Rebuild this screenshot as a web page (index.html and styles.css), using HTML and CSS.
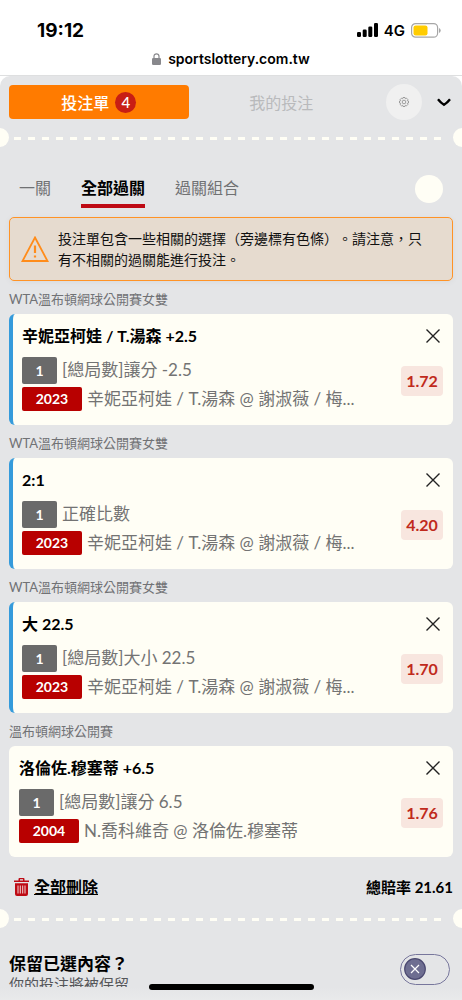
FILE: index.html
```html
<!DOCTYPE html>
<html lang="zh-Hant">
<head>
<meta charset="utf-8">
<meta name="viewport" content="width=device-width, initial-scale=1">
<title>投注單</title>
<link rel="stylesheet" href="styles.css">
</head>
<body>
<div class="screen">
  <header class="browser">
    <div class="status">
      <span class="clock">19:12</span>
      <span class="signals">
        <svg width="21" height="14" viewBox="0 0 21 14" aria-hidden="true"><rect x="0" y="9" width="4" height="5" rx="1.3"/><rect x="5.7" y="6.5" width="4" height="7.5" rx="1.3"/><rect x="11.3" y="3.5" width="4" height="10.5" rx="1.3"/><rect x="17" y="0" width="4" height="14" rx="1.3"/></svg>
        <span class="network">4G</span>
        <svg width="30" height="15" viewBox="0 0 30 15" aria-hidden="true"><rect x=".6" y=".6" width="26" height="13.6" rx="4" fill="none" stroke="#a6a6a6" stroke-width="1.2"/><rect x="2.5" y="2.4" width="14" height="10" rx="2.2" fill="#fc0"/><path d="M28 5v5q1.7-.8 1.7-2.5T28 5z" fill="#a6a6a6"/></svg>
      </span>
    </div>
    <div class="address">
      <svg width="9" height="12" viewBox="0 0 9 12" aria-hidden="true"><rect x="0" y="5" width="9" height="7" rx="1.3" fill="#88888c"/><path d="M2 5.500V3.300a2.500 2.500 0 0 1 5 0v2.200" fill="none" stroke="#88888c" stroke-width="1.200"/></svg>
      <span>sportslottery.com.tw</span>
    </div>
  </header>

  <main class="slip">
    <nav class="topbar">
      <button class="slip-tab active" type="button">投注單 <span class="count">4</span></button>
      <button class="slip-tab idle" type="button">我的投注</button>
      <button class="settings" type="button" aria-label="設定">
        <svg width="10" height="10" viewBox="0 0 20 20" fill="none" stroke="#8f8f8f" stroke-width="1.700" aria-hidden="true"><path d="M8 1h4l.7 2.500 2.300-1.200 2.700 2.700-1.200 2.300L19 8v4l-2.500.7 1.200 2.300-2.700 2.700-2.300-1.200L12 19H8l-.7-2.500L5 17.700 2.300 15l1.200-2.300L1 12V8l2.500-.7L2.300 5 5 2.300l2.300 1.200z"/><circle cx="10" cy="10" r="3.600"/></svg>
      </button>
      <button class="collapse" type="button" aria-label="收合">
        <svg width="14" height="9" viewBox="0 0 14 9" fill="none" stroke="#000" stroke-width="2.400" aria-hidden="true"><path d="M1 1.200Q4 5 7 6.800 10 5 13 1.200"/></svg>
      </button>
    </nav>

    <div class="perforation"><span class="dashes"></span></div>

    <nav class="modes">
      <button class="mode" type="button">一關</button>
      <button class="mode current" type="button">全部過關</button>
      <button class="mode" type="button">過關組合</button>
      <span class="dot"></span>
    </nav>

    <div class="alert" role="alert">
      <svg width="28" height="27" viewBox="0 0 28 27" fill="none" stroke="#ff8c1a" stroke-width="1.800" aria-hidden="true"><path d="M14 1.500 26.500 25h-25z"/><path d="M14 9.500v7.500M14 19.500v2" stroke-width="2.200"/></svg>
      <p>投注單包含一些相關的選擇（旁邊標有色條）。請注意，只有不相關的過關能進行投注。</p>
    </div>

    <section class="bet">
      <h2 class="league">WTA溫布頓網球公開賽女雙</h2>
      <article class="card related">
        <div class="card-head"><h3>辛妮亞柯娃 / T.湯森 +2.5</h3>
          <button class="remove" type="button" aria-label="移除"><svg width="14" height="14" viewBox="0 0 14 14" aria-hidden="true"><path d="M.5.5l13 13M13.500.5l-13 13"/></svg></button></div>
        <div class="card-body">
          <div class="details">
            <p class="market"><span class="tag">1</span><span class="text">[總局數]讓分 -2.5</span></p>
            <p class="event"><span class="tag code">2023</span><span class="text">辛妮亞柯娃 / T.湯森 @ 謝淑薇 / 梅...</span></p>
          </div>
          <span class="odds">1.72</span>
        </div>
      </article>
    </section>

    <section class="bet">
      <h2 class="league">WTA溫布頓網球公開賽女雙</h2>
      <article class="card related">
        <div class="card-head"><h3>2:1</h3>
          <button class="remove" type="button" aria-label="移除"><svg width="14" height="14" viewBox="0 0 14 14" aria-hidden="true"><path d="M.5.5l13 13M13.500.5l-13 13"/></svg></button></div>
        <div class="card-body">
          <div class="details">
            <p class="market"><span class="tag">1</span><span class="text">正確比數</span></p>
            <p class="event"><span class="tag code">2023</span><span class="text">辛妮亞柯娃 / T.湯森 @ 謝淑薇 / 梅...</span></p>
          </div>
          <span class="odds">4.20</span>
        </div>
      </article>
    </section>

    <section class="bet">
      <h2 class="league">WTA溫布頓網球公開賽女雙</h2>
      <article class="card related">
        <div class="card-head"><h3>大 22.5</h3>
          <button class="remove" type="button" aria-label="移除"><svg width="14" height="14" viewBox="0 0 14 14" aria-hidden="true"><path d="M.5.5l13 13M13.500.5l-13 13"/></svg></button></div>
        <div class="card-body">
          <div class="details">
            <p class="market"><span class="tag">1</span><span class="text">[總局數]大小 22.5</span></p>
            <p class="event"><span class="tag code">2023</span><span class="text">辛妮亞柯娃 / T.湯森 @ 謝淑薇 / 梅...</span></p>
          </div>
          <span class="odds">1.70</span>
        </div>
      </article>
    </section>

    <section class="bet">
      <h2 class="league">溫布頓網球公開賽</h2>
      <article class="card">
        <div class="card-head"><h3>洛倫佐.穆塞蒂 +6.5</h3>
          <button class="remove" type="button" aria-label="移除"><svg width="14" height="14" viewBox="0 0 14 14" aria-hidden="true"><path d="M.5.5l13 13M13.500.5l-13 13"/></svg></button></div>
        <div class="card-body">
          <div class="details">
            <p class="market"><span class="tag">1</span><span class="text">[總局數]讓分 6.5</span></p>
            <p class="event"><span class="tag code">2004</span><span class="text">N.喬科維奇 @ 洛倫佐.穆塞蒂</span></p>
          </div>
          <span class="odds">1.76</span>
        </div>
      </article>
    </section>

    <div class="summary">
      <button class="clear" type="button">
        <svg width="15" height="18" viewBox="0 0 15 18" aria-hidden="true"><path d="M0 2.500h4.500V1q0-1 1-1h4q1 0 1 1v1.500H15V4H0zM6 1.300v1.200h3V1.300zM1 5.200h13V16q0 2-2 2H3q-2 0-2-2z" fill="#be0a14" fill-rule="evenodd"/><path d="M4 7.500v8M6.300 7.500v8M8.700 7.500v8M11 7.500v8" stroke="#f0d5d5" stroke-width="1"/></svg>
        <span>全部刪除</span>
      </button>
      <p class="total">總賠率 21.61</p>
    </div>

    <div class="perforation"><span class="dashes"></span></div>

    <div class="keep">
      <div>
        <label class="keep-title" for="keep">保留已選內容？</label>
        <p class="keep-note">你的投注將被保留</p>
      </div>
      <span class="switch">
        <input type="checkbox" id="keep">
        <svg class="knob" width="22" height="22" viewBox="0 0 22 22" aria-hidden="true"><circle cx="11" cy="11" r="10.300" fill="#6e6e91" stroke="#4a4870" stroke-width="1.200"/><path d="M7 7l8 8M15 7l-8 8" stroke="#fff" stroke-width="1.200"/></svg>
      </span>
    </div>
  </main>
  <div class="home"><span></span></div>
</div>
</body>
</html>
```
FILE: styles.css
```css
* { box-sizing: border-box; }

body {
  margin: 0;
  background: #fff;
  color: #111;
  font-family: Lato, "Noto Sans CJK TC", sans-serif;
  text-spacing-trim: space-all;
}

h2, h3, p { margin: 0; }

button {
  margin: 0;
  padding: 0;
  border: 0;
  background: none;
  color: inherit;
  font: inherit;
}

svg { display: block; flex: none; }

.screen {
  position: relative;
  display: flex;
  flex-direction: column;
  height: 100vh;
  overflow: hidden;
}

/* Browser chrome */
.browser {
  flex: none;
  padding-top: 18px;
  border-bottom: 1px solid #dedfe0;
  background: #fff;
  color: #000;
  font-family: Inter, sans-serif;
}

.status {
  display: flex;
  align-items: center;
  justify-content: space-between;
  height: 24px;
  padding: 0 21px 0 37px;
}

.clock { font-size: 19px; font-weight: 700; }
.signals { display: flex; align-items: center; gap: 6px; }
.network { font-size: 15px; font-weight: 600; }

.address {
  display: flex;
  align-items: center;
  justify-content: center;
  gap: 7px;
  height: 33px;
  font-size: 14px;
  font-weight: 600;
}

/* Bet slip */
.slip {
  flex: 1;
  min-height: 0;
  overflow: hidden;
  border-radius: 10px 10px 0 0;
  background: #e4e5e7;
}

.topbar {
  display: flex;
  align-items: center;
  padding: 8px 10px 0 9px;
}

.slip-tab {
  display: flex;
  flex: 1;
  align-items: center;
  justify-content: center;
  gap: 6px;
  height: 34px;
  border-radius: 4px;
  color: #b9babc;
  font-size: 16px;
}

.slip-tab.active { background: #ff7b00; color: #fff; font-weight: 500; }
.slip-tab.idle { text-indent: 6px; }

.count {
  width: 21px;
  border-radius: 50%;
  background: #c81e14;
  font-size: 15px;
  line-height: 21px;
}

.settings {
  display: grid;
  place-items: center;
  width: 36px;
  height: 36px;
  margin: 0 14px 0 18px;
  border-radius: 50%;
  background: #f0f0f0;
}

.collapse { padding: 4px 1px; }

.perforation {
  display: flex;
  align-items: center;
  justify-content: space-between;
  height: 19px;
  overflow: hidden;
}

.topbar + .perforation { margin-top: 8px; }

.perforation::before,
.perforation::after {
  content: "";
  flex: none;
  width: 19px;
  height: 19px;
  border-radius: 50%;
  background: #fffef5;
}

.perforation::before { margin-left: -10px; }
.perforation::after { margin-right: -10px; }

.dashes {
  flex: 1;
  height: 3px;
  margin: 2px 5px 0;
  background: repeating-linear-gradient(90deg, #fffef5 0 7px, transparent 7px 14px);
}

.modes {
  display: flex;
  align-items: center;
  gap: 30px;
  padding: 23px 19px 0;
}

.mode {
  height: 38px;
  border-top: 1px solid transparent;
  border-bottom: 4px solid transparent;
  color: #707173;
  font-size: 16px;
  line-height: 32px;
}

.mode.current { border-bottom-color: #be0a14; color: #000; font-weight: 700; }

.dot {
  width: 28px;
  height: 28px;
  margin-left: auto;
  border-radius: 50%;
  background: #fffef5;
}

.alert {
  display: flex;
  align-items: center;
  gap: 9px;
  margin: 9px 9px 0;
  padding: 10px 18px 10px 11px;
  border: 1px solid #ff9326;
  border-radius: 5px;
  background: #e6dbcf;
  box-shadow: 0 1px 6px #0000000d;
  font-size: 14px;
  line-height: 21px;
}

.bet { margin: 0 9px; }

.league {
  padding: 8px 0 5px;
  color: #717275;
  font-size: 13px;
  font-weight: 400;
  line-height: 20px;
}

.card {
  padding: 10px 10px 14px;
  border-radius: 6px;
  background: #fffef5;
}

.card.related { padding-left: 9px; border-left: 4px solid #359bdb; }

.card-head {
  display: flex;
  align-items: center;
  justify-content: space-between;
  padding-right: 3px;
}

.card h3 { color: #000; font-size: 16px; font-weight: 700; line-height: 24px; }
.remove svg { stroke: #222; stroke-width: 1.4; }

.card-body {
  display: flex;
  align-items: center;
  justify-content: space-between;
  padding-top: 9px;
}

.details { display: grid; gap: 3px; }

.market,
.event {
  display: flex;
  align-items: center;
  gap: 5px;
  color: #737373;
  font-size: 17px;
  line-height: 24px;
  white-space: nowrap;
}

.tag {
  width: 35px;
  border-radius: 2px;
  background: #6a6a6a;
  color: #fff;
  font-size: 14px;
  font-weight: 700;
  line-height: 27px;
  text-align: center;
}

.tag.code { width: 60px; background: #b80000; line-height: 24px; }

.market .text,
.event .text { margin-top: -1px; }

.odds {
  align-self: flex-start;
  width: 42px;
  margin-top: 9px;
  border-radius: 4px;
  background: #f8e6df;
  color: #c02a1c;
  font-size: 16px;
  font-weight: 700;
  line-height: 30px;
  text-align: center;
}

.summary {
  display: flex;
  align-items: center;
  justify-content: space-between;
  padding: 18px 9px 10px 14px;
  color: #000;
  font-weight: 700;
  line-height: 24px;
}

.clear { display: flex; align-items: center; gap: 5px; font-weight: 700; text-decoration: underline; }
.total { font-size: 15px; }

.keep {
  display: flex;
  align-items: flex-start;
  justify-content: space-between;
  padding: 24px 12px 0 9px;
}

.keep-title { color: #000; font-size: 17px; font-weight: 700; line-height: 24px; }
.keep-note { color: #55565a; font-size: 15px; line-height: 16px; }

.switch { position: relative; margin-top: 2px; }

.switch input {
  display: block;
  width: 50px;
  height: 31px;
  margin: 0;
  border: 1px solid #77769c;
  border-radius: 16px;
  appearance: none;
}

.knob { position: absolute; top: 4px; left: 4px; pointer-events: none; }

.home {
  position: absolute;
  right: 0;
  bottom: 0;
  left: 0;
  display: flex;
  justify-content: center;
  height: 13px;
  background: linear-gradient(#e4e5e7, #e9eaeb);
}

.home span {
  width: 165px;
  height: 6px;
  margin-top: -3px;
  border-radius: 3px;
  background: #000;
}
```
